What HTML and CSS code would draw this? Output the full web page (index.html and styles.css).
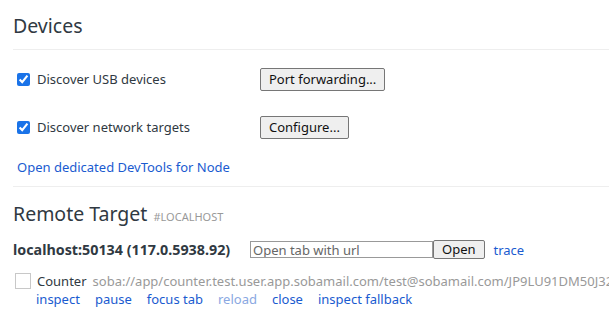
FILE: index.html
```html
<!DOCTYPE html>
<html>
<head>
<meta charset="utf-8">
<link rel="stylesheet" href="styles.css">
</head>
<body>
<div class="page">
  <h1 class="section-title">Devices</h1>
  <div class="option-row">
    <label class="check"><input type="checkbox" checked><span>Discover USB devices</span></label>
    <button class="btn">Port forwarding...</button>
  </div>
  <div class="option-row">
    <label class="check"><input type="checkbox" checked><span>Discover network targets</span></label>
    <button class="btn">Configure...</button>
  </div>
  <div class="node-link"><a href="#">Open dedicated DevTools for Node</a></div>
  <div class="divider"></div>
  <h2 class="remote-title">Remote Target <span class="tag">#LOCALHOST</span></h2>
  <div class="browser-row">
    <span class="browser-name">localhost:50134 (117.0.5938.92)</span>
    <input class="url-input" type="text" placeholder="Open tab with url"><button class="btn btn-open">Open</button>
    <a class="trace" href="#">trace</a>
  </div>
  <div class="target">
    <div class="target-head">
      <span class="thumb"></span>
      <span class="target-name">Counter</span>
      <span class="target-url">soba://app/counter.test.user.app.sobamail.com/test@sobamail.com/JP9LU91DM50J32</span>
    </div>
    <div class="actions">
      <a href="#">inspect</a><a href="#">pause</a><a href="#">focus tab</a><span class="disabled">reload</span><a href="#">close</a><a href="#">inspect fallback</a>
    </div>
  </div>
</div>
</body>
</html>
```
FILE: styles.css
```css
html, body {
  margin: 0;
  padding: 0;
  overflow: hidden;
}
body {
  font-family: "Noto Sans", "Open Sans", sans-serif;
  font-size: 13px;
  color: #303942;
  background: #fff;
}
.page {
  padding-left: 13px;
  width: 596px;
}
a {
  color: #1a5bd0;
  text-decoration: none;
}
.section-title {
  margin: 0;
  padding-top: 12px;
  padding-bottom: 9px;
  font-size: 19.5px;
  font-weight: normal;
  line-height: 28px;
  color: #303942;
  border-bottom: 1px solid #eeeeee;
}
.option-row {
  display: flex;
  align-items: center;
  height: 24px;
  padding-left: 4px;
}
.option-row:first-of-type { margin-top: 17px; }
.option-row + .option-row { margin-top: 24px; }
.check {
  display: flex;
  align-items: center;
  width: 243px;
}
.check input {
  margin: 0 7px 0 0;
  width: 13px;
  height: 13px;
  accent-color: #1a73e8;
}
.btn {
  font-family: "Noto Sans", "Open Sans", sans-serif;
  font-size: 13px;
  color: #111;
  background: #efefef;
  border: 1px solid #767676;
  border-radius: 2px;
  height: 23px;
  padding: 0 8px;
  line-height: 19px;
}
.node-link {
  padding-left: 4px;
  margin-top: 19px;
  line-height: 18px;
}
.divider {
  margin-top: 10px;
  border-top: 1px solid #eeeeee;
}
.remote-title {
  margin: 0;
  margin-top: 14px;
  font-size: 19.5px;
  font-weight: normal;
  line-height: 26px;
  color: #303942;
}
.tag {
  font-size: 11px;
  color: #999;
  margin-left: 1px;
}
.browser-row {
  display: flex;
  align-items: center;
  margin-top: 10px;
  height: 19px;
}
.browser-name {
  font-weight: bold;
  font-size: 14.3px;
  width: 237px;
  color: #303942;
  white-space: nowrap;
}
.url-input {
  box-sizing: border-box;
  width: 183px;
  height: 17px;
  border: 1px solid #999;
  padding: 0 2px;
  font-family: "Noto Sans", "Open Sans", sans-serif;
  font-size: 13px;
  margin: 0;
}
.url-input::placeholder { color: #666; }
.btn-open {
  height: 19px;
  line-height: 15px;
  padding: 0 8px;
  margin: 0;
}
.trace { margin-left: 9px; }
.target {
  margin-top: 13px;
  padding-left: 2px;
  overflow: hidden;
}
.target-head {
  display: flex;
  align-items: center;
  height: 18px;
  white-space: nowrap;
}
.thumb {
  box-sizing: border-box;
  width: 16px;
  height: 16px;
  border: 1px solid #c8c8c8;
  margin-right: 6px;
  flex: none;
}
.target-name { color: #303942; margin-right: 6px; }
.target-url { color: #999; }
.actions {
  padding-left: 21px;
  line-height: 18px;
  display: flex;
}
.actions a, .actions span { margin-right: 15px; }
.actions .disabled { color: #8aa8e2; }
```
